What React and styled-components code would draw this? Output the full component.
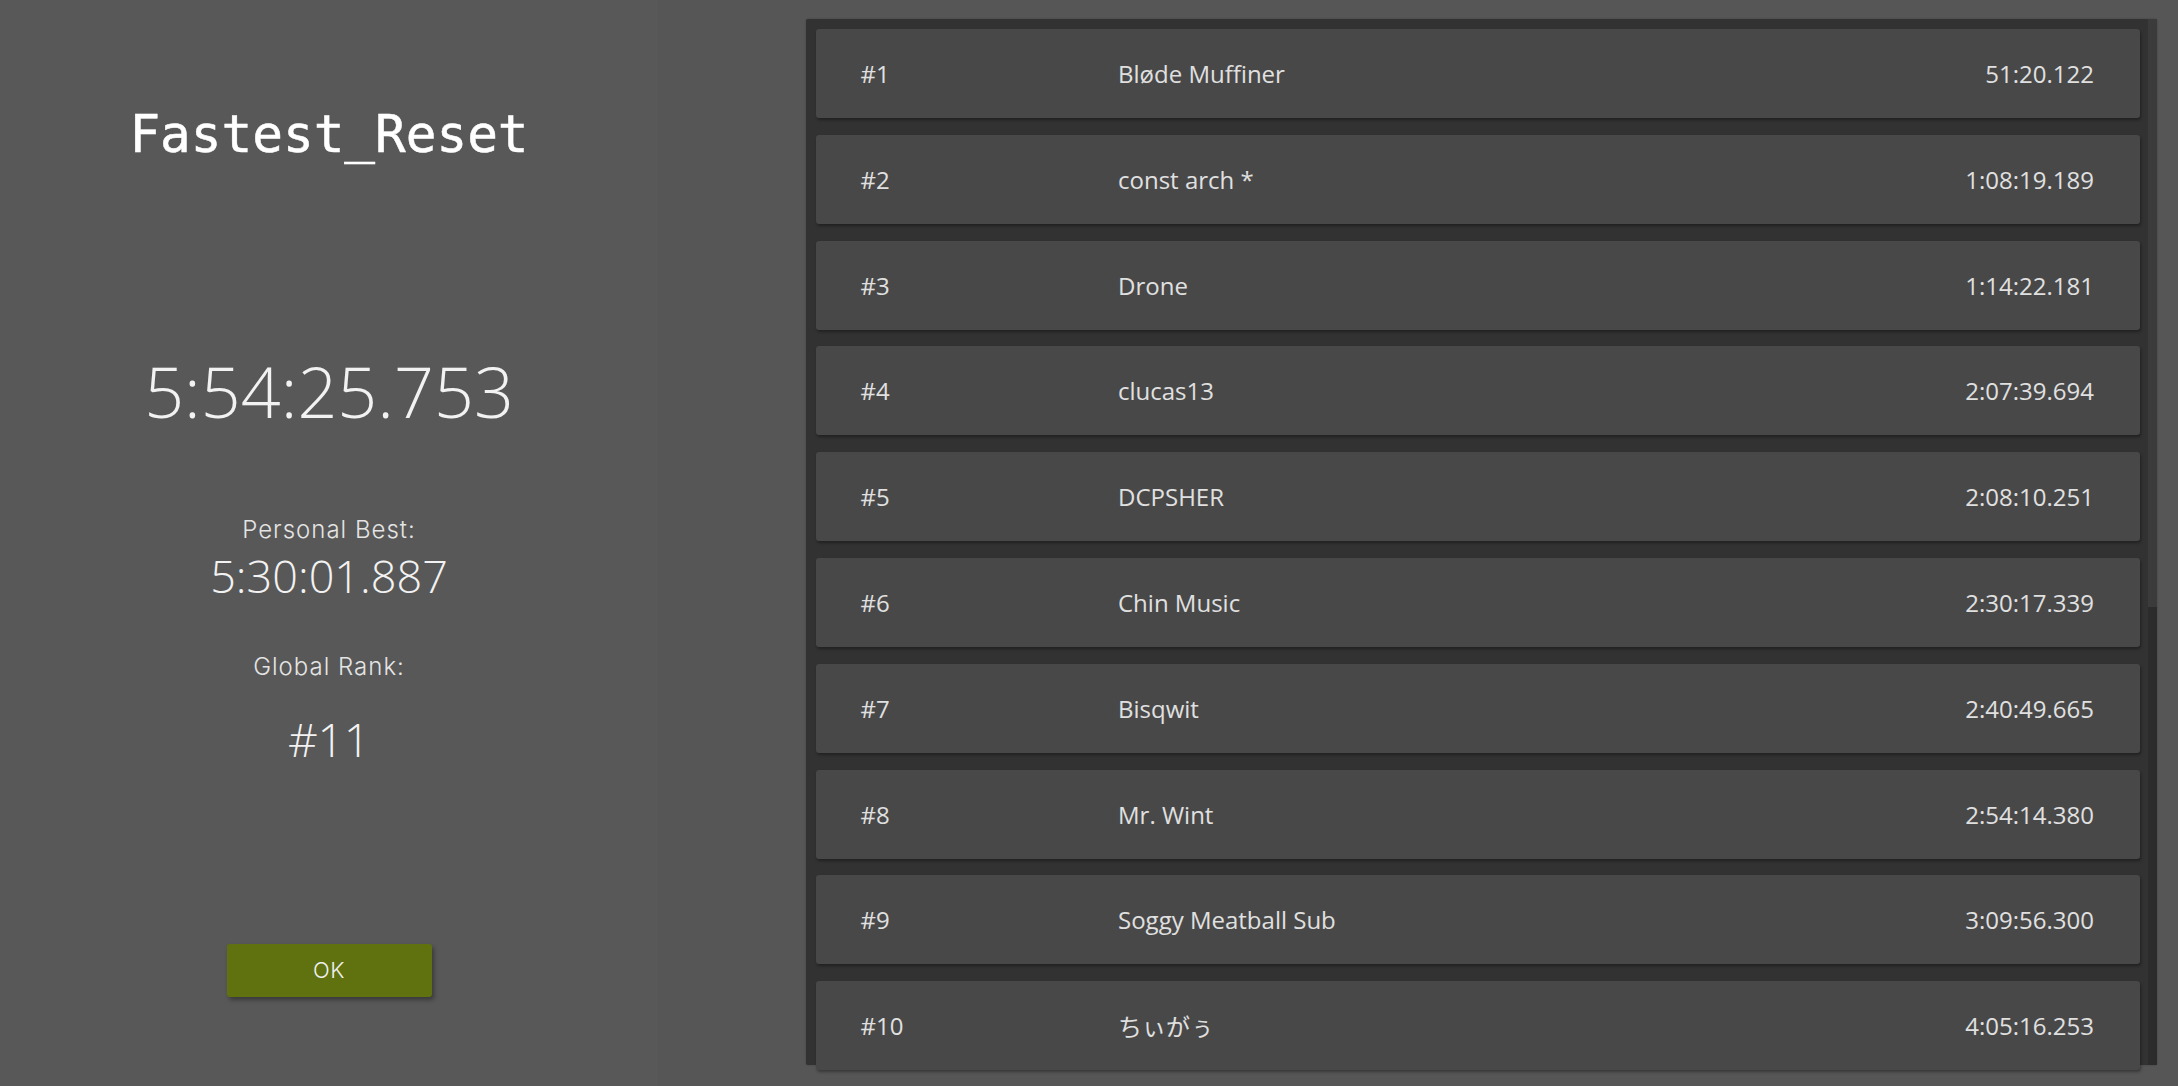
import React from 'react';
import styled, { createGlobalStyle } from 'styled-components';

const entries = [
  { rank: 1, name: 'Bløde Muffiner', time: '51:20.122' },
  { rank: 2, name: 'const arch *', time: '1:08:19.189' },
  { rank: 3, name: 'Drone', time: '1:14:22.181' },
  { rank: 4, name: 'clucas13', time: '2:07:39.694' },
  { rank: 5, name: 'DCPSHER', time: '2:08:10.251' },
  { rank: 6, name: 'Chin Music', time: '2:30:17.339' },
  { rank: 7, name: 'Bisqwit', time: '2:40:49.665' },
  { rank: 8, name: 'Mr. Wint', time: '2:54:14.380' },
  { rank: 9, name: 'Soggy Meatball Sub', time: '3:09:56.300' },
  { rank: 10, name: 'ちぃがぅ', time: '4:05:16.253' },
];

const App = () => {
  return (
    <>
      <GlobalStyle />
      <Screen>
        <ResultColumn>
          <Title>Fastest_Reset</Title>
          <BigTime>5:54:25.753</BigTime>
          <Label $top={91.9}>Personal Best:</Label>
          <Value $size={45} $top={11.3}>5:30:01.887</Value>
          <Label $top={56.7}>Global Rank:</Label>
          <Value $size={46} $top={37.3}>#11</Value>
          <OkButton>OK</OkButton>
        </ResultColumn>

        <BoardArea>
          <BoardPanel>
            <RowList>
              {entries.map((e) => (
                <Row key={e.rank}>
                  <span>#{e.rank}</span>
                  <Name>{e.name}</Name>
                  <span>{e.time}</span>
                </Row>
              ))}
            </RowList>
            <ScrollTrack>
              <ScrollThumb />
            </ScrollTrack>
          </BoardPanel>
        </BoardArea>
      </Screen>
    </>
  );
};

const GlobalStyle = createGlobalStyle`
  html, body {
    margin: 0;
    padding: 0;
    background: #565656;
    overflow: hidden;
  }
  * {
    box-sizing: border-box;
  }
`;

const Screen = styled.div`
  display: flex;
  width: 100%;
  height: 100vh;
`;

const ResultColumn = styled.div`
  width: 658px;
  flex-shrink: 0;
  display: flex;
  flex-direction: column;
  align-items: center;
  padding-top: 109px;
  background: #585858;
  font-family: "Open Sans", "Noto Sans", sans-serif;
  color: #f2f2f2;
`;

const Title = styled.h1`
  margin: 0;
  font-family: "DejaVu Sans Mono", "Liberation Mono", monospace;
  font-weight: normal;
  font-size: 51px;
  line-height: 1;
  color: #ffffff;
  -webkit-text-stroke: 0.5px #ffffff;
`;

const BigTime = styled.div`
  margin-top: 195.8px;
  font-weight: 300;
  font-size: 70px;
  line-height: 1;
`;

const Label = styled.div`
  margin-top: ${(p) => p.$top}px;
  font-family: Inter, Lato, sans-serif;
  font-weight: 300;
  font-size: 24px;
  letter-spacing: 1px;
  line-height: 1;
  color: #e4e4e4;
`;

const Value = styled.div`
  margin-top: ${(p) => p.$top}px;
  font-weight: 300;
  font-size: ${(p) => p.$size}px;
  line-height: 1;
`;

const OkButton = styled.button`
  margin-top: 182px;
  width: 205px;
  height: 53px;
  border: none;
  border-radius: 3px;
  background: #60720f;
  box-shadow: 2px 3px 4px rgba(0, 0, 0, 0.35);
  color: #f0f0f0;
  font-family: Inter, Lato, sans-serif;
  font-weight: 300;
  font-size: 22px;
  letter-spacing: 0.5px;
  cursor: pointer;
`;

const BoardArea = styled.div`
  flex: 1;
  padding: 19px 21px 0 148px;
`;

const BoardPanel = styled.div`
  display: flex;
  height: 1046px;
  padding: 10px 0 0 10px;
  background: #323232;
  border-radius: 2px;
  box-shadow: 0 0 2px rgba(0, 0, 0, 0.25);
`;

const RowList = styled.div`
  flex: 1;
  display: flex;
  flex-direction: column;
  gap: 16.8px;
`;

const Row = styled.div`
  display: grid;
  grid-template-columns: 257.5px 1fr auto;
  align-items: center;
  flex-shrink: 0;
  height: 89px;
  padding: 0 46px 0 44.5px;
  background: #484848;
  border-radius: 3px;
  box-shadow: 1px 2px 3px rgba(0, 0, 0, 0.35);
  font-family: "Open Sans", "Noto Sans CJK JP", sans-serif;
  font-weight: 400;
  font-size: 24px;
  color: #e0e0e0;
`;

const Name = styled.span`
  white-space: nowrap;
`;

const ScrollTrack = styled.div`
  width: 9px;
  margin: -10px 0 0 8px;
  display: flex;
  flex-direction: column;
  justify-content: flex-end;
  background: #3b3b3b;
`;

const ScrollThumb = styled.div`
  height: 458px;
  background: #2c2c2c;
`;

export default App;
